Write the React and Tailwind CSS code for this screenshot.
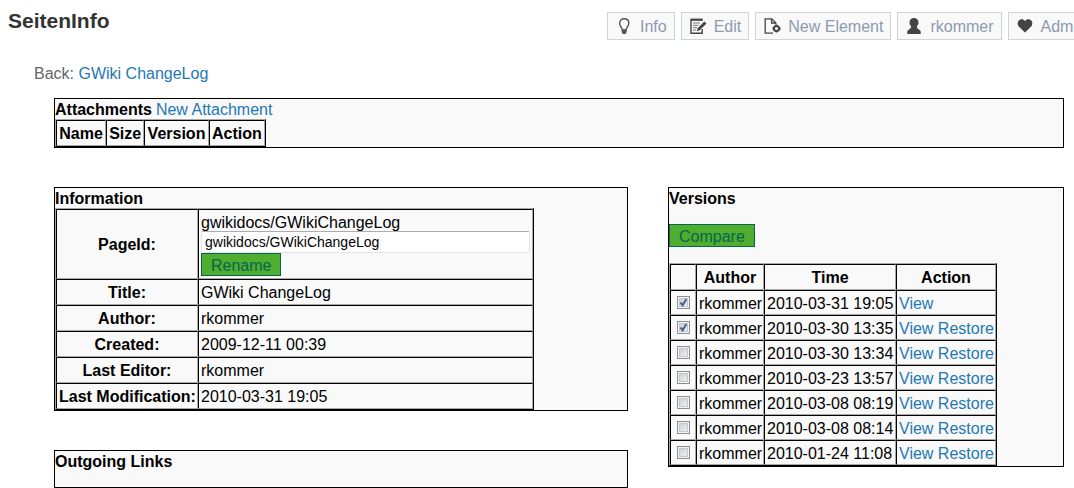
import React from "react";

const linkClass = "text-[#1f78b4] hover:underline";
const tableClass =
  "border border-t-[#a8a8a8] border-l-[#a8a8a8] border-r-black border-b-black border-separate border-spacing-0";
const cellBorder =
  "border border-t-black border-l-black border-r-[#a8a8a8] border-b-[#a8a8a8] px-0.5";
const cellClass = `${cellBorder} pt-0.5`;
const greenButton =
  "block h-[23px] border border-[#05664f] bg-[#4fad2f] px-[9px] pt-0.5 leading-5 text-[#05664f]";

function BulbIcon() {
  return (
    <svg width="17" height="16" viewBox="0 0 17 16" fill="none" aria-hidden="true">
      <path
        d="M6.300 12c0-2.400-2.700-3.700-2.700-6.800C3.600 2.500 5.600.8 8.200.8s4.600 1.700 4.600 4.400c0 3.100-2.700 4.400-2.700 6.800z"
        stroke="#555"
        strokeWidth="1.400"
      />
      <path d="M5.700 11.800h5v2.200L9.700 16h-3l-1-2z" fill="#555" />
    </svg>
  );
}

function EditIcon() {
  return (
    <svg width="17" height="16" viewBox="0 0 17 16" fill="none" aria-hidden="true">
      <path d="M12 2.500V1.500H1v13.700h11.200V11" stroke="#444" strokeWidth="1.400" />
      <path d="M1 1.800h11.500" stroke="#444" strokeWidth="2" />
      <path d="M3 5h7M3 7.300h5.500M3 9.600h4M3 12h3" stroke="#777" />
      <path d="M14.300 3.500 16.500 5.600 9.700 12.300 6.800 13.300 7.700 10.200z" fill="#444" />
    </svg>
  );
}

function NewPageIcon() {
  return (
    <svg width="17" height="16" viewBox="0 0 17 16" fill="none" aria-hidden="true">
      <path d="M9 15.200H1.200V.8h6.600l4 4v1.700M7.600 1v4h4" stroke="#444" strokeWidth="1.300" />
      <circle cx="12.500" cy="10.500" r="2.600" stroke="#444" strokeWidth="2" />
      <path
        d="M12.500 6.500v1.600M12.500 13v1.600M8.500 10.500h1.600M15 10.500h1.600"
        stroke="#444"
        strokeWidth="1.800"
      />
    </svg>
  );
}

function UserIcon() {
  return (
    <svg width="17" height="16" viewBox="0 0 17 16" fill="#444" aria-hidden="true">
      <path d="M8 0c2.600 0 4.500 1.800 4.500 4.400 0 1.600-.6 2.900-1.600 3.700 0 1.700.5 2.600 2 3.300 1.200.6 1.800 1.400 1.800 2.800V16H1.300v-1.800c0-1.400.6-2.200 1.800-2.800 1.500-.7 2-1.600 2-3.300-1-.8-1.600-2.100-1.600-3.700C3.500 1.800 5.400 0 8 0z" />
    </svg>
  );
}

function HeartIcon() {
  return (
    <svg width="17" height="16" viewBox="0 0 17 16" fill="#444" aria-hidden="true">
      <path d="M8 14.600 2 8.700C.2 6.800.3 4 1.800 2.500 3.500.7 6.600.9 8 3.300c1.400-2.400 4.500-2.600 6.200-.8 1.500 1.500 1.600 4.300-.2 6.200z" />
    </svg>
  );
}

const actions = [
  { label: "Info", Icon: BulbIcon },
  { label: "Edit", Icon: EditIcon },
  { label: "New Element", Icon: NewPageIcon },
  { label: "rkommer", Icon: UserIcon },
  { label: "Adm", Icon: HeartIcon },
];

const details = [
  ["Title:", "GWiki ChangeLog"],
  ["Author:", "rkommer"],
  ["Created:", "2009-12-11 00:39"],
  ["Last Editor:", "rkommer"],
  ["Last Modification:", "2010-03-31 19:05"],
];

const versions = [
  { time: "2010-03-31 19:05", checked: true, current: true },
  { time: "2010-03-30 13:35", checked: true },
  { time: "2010-03-30 13:34" },
  { time: "2010-03-23 13:57" },
  { time: "2010-03-08 08:19" },
  { time: "2010-03-08 08:14" },
  { time: "2010-01-24 11:08" },
];

function Panel({ title, extra, className = "", children }) {
  return (
    <section className={`border border-black bg-[#f9f9f9] ${className}`}>
      <div className="flex h-5 gap-1 leading-[22px]">
        <h2 className="font-bold">{title}</h2>
        {extra}
      </div>
      {children}
    </section>
  );
}

function VersionCheckbox({ label, defaultChecked }) {
  return (
    <label className="relative mx-auto block size-[13px]">
      <input
        type="checkbox"
        aria-label={label}
        defaultChecked={defaultChecked}
        className="peer block size-[13px] appearance-none border border-[#8e8f8f] bg-linear-to-br from-[#c4c9d0] to-[#f6f6f6] shadow-[inset_0_0_0_1px_#f4f4f4,inset_0_0_0_2px_#c3c7cc]"
      />
      <svg
        className="pointer-events-none absolute inset-0 hidden peer-checked:block"
        width="13"
        height="13"
        viewBox="0 0 13 13"
        fill="none"
        aria-hidden="true"
      >
        <path d="M3.500 6.500 5.700 9.200 9.300 3" stroke="#4a5f97" strokeWidth="2" />
      </svg>
    </label>
  );
}

export default function App() {
  return (
    <div className="overflow-hidden bg-white font-['Liberation_Sans',Arial,sans-serif] text-base leading-5 text-black">
      <header className="flex items-start justify-between">
        <h1 className="pt-[9px] pl-2 text-[21px] leading-6 font-bold text-[#333]">SeitenInfo</h1>
        <nav className="flex w-[467px] shrink-0 gap-1.5 overflow-hidden pt-3">
          {actions.map(({ label, Icon }) => (
            <button
              key={label}
              type="button"
              className="flex h-7 shrink-0 items-center gap-[7px] border border-[#cdd5d5] bg-[#f9f9f9] pr-[7px] pl-2 whitespace-nowrap text-[#8c9bb0]"
            >
              <Icon />
              <span className="pt-0.5">{label}</span>
            </button>
          ))}
        </nav>
      </header>

      <main className="pr-2.5 pl-[54px]">
        <p className="mt-6 mb-3.5 -ml-5 text-[#666]">
          Back:{" "}
          <a href="#changelog" className={linkClass}>
            GWiki ChangeLog
          </a>
        </p>

        <Panel
          title="Attachments"
          extra={
            <a href="#new-attachment" className={linkClass}>
              New Attachment
            </a>
          }
        >
          <table className={`${tableClass} w-[211px]`}>
            <thead>
              <tr className="h-[26px]">
                {["Name", "Size", "Version", "Action"].map((name) => (
                  <th key={name} className={cellClass}>
                    {name}
                  </th>
                ))}
              </tr>
            </thead>
          </table>
        </Panel>

        <div className="mt-[39px] grid grid-cols-[574fr_396fr] items-start gap-10">
          <div className="flex flex-col gap-[39px]">
            <Panel title="Information">
              <table className={`${tableClass} w-[479px] table-fixed`}>
                <colgroup>
                  <col className="w-[142px]" />
                  <col />
                </colgroup>
                <tbody>
                  <tr>
                    <th scope="row" className={cellClass}>
                      <label htmlFor="page-id">PageId:</label>
                    </th>
                    <td className={`${cellBorder} pt-px pb-0.5`}>
                      <div className="h-5 leading-6">gwikidocs/GWikiChangeLog</div>
                      <input
                        id="page-id"
                        type="text"
                        defaultValue="gwikidocs/GWikiChangeLog"
                        className="block h-[22px] w-full rounded-xs border border-[#e2e3ea] border-t-[#abadb3] bg-white px-[3px] text-sm leading-5"
                      />
                      <button type="button" className={greenButton}>
                        Rename
                      </button>
                    </td>
                  </tr>
                  {details.map(([name, value]) => (
                    <tr key={name} className="h-[26px]">
                      <th scope="row" className={`${cellClass} whitespace-nowrap`}>
                        {name}
                      </th>
                      <td className={cellClass}>{value}</td>
                    </tr>
                  ))}
                </tbody>
              </table>
            </Panel>
            <Panel title="Outgoing Links" className="pb-4" />
          </div>

          <Panel title="Versions">
            <button type="button" className={`${greenButton} my-4`}>
              Compare
            </button>
            <table className={`${tableClass} w-[328px] table-fixed whitespace-nowrap`}>
              <colgroup>
                <col className="w-[26px]" />
                <col className="w-[68px]" />
                <col className="w-[132px]" />
                <col />
              </colgroup>
              <thead>
                <tr className="h-[26px]">
                  <td className={cellClass} />
                  <th className={cellClass}>Author</th>
                  <th className={cellClass}>Time</th>
                  <th className={cellClass}>Action</th>
                </tr>
              </thead>
              <tbody>
                {versions.map(({ time, checked, current }) => (
                  <tr key={time} className="h-[25px]">
                    <td className={cellBorder}>
                      <VersionCheckbox label={`Select ${time}`} defaultChecked={checked} />
                    </td>
                    <td className={cellClass}>rkommer</td>
                    <td className={cellClass}>{time}</td>
                    <td className={cellClass}>
                      <a href="#view" className={linkClass}>
                        View
                      </a>
                      {!current && (
                        <>
                          {" "}
                          <a href="#restore" className={linkClass}>
                            Restore
                          </a>
                        </>
                      )}
                    </td>
                  </tr>
                ))}
              </tbody>
            </table>
          </Panel>
        </div>
      </main>
    </div>
  );
}
